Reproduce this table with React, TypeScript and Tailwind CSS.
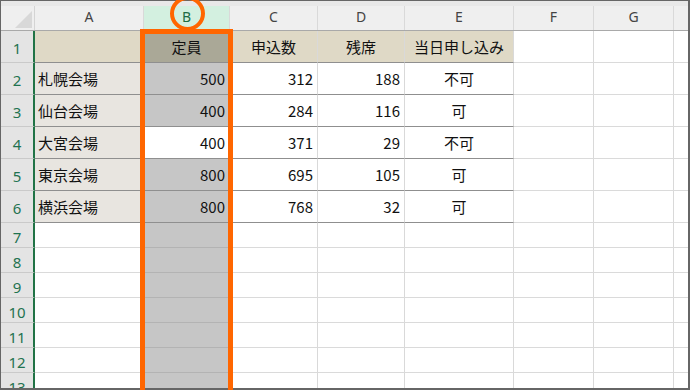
import React from "react";

const colW = [
  "w-[109px]",
  "w-[86px]",
  "w-[88px]",
  "w-[87px]",
  "w-[109px]",
  "w-[80px]",
  "w-[80px]",
];
const letters = ["A", "B", "C", "D", "E", "F", "G"];

type Row = { cells: string[]; big: boolean };

const rows: Row[] = [
  { cells: ["", "定員", "申込数", "残席", "当日申し込み"], big: true },
  { cells: ["札幌会場", "500", "312", "188", "不可"], big: true },
  { cells: ["仙台会場", "400", "284", "116", "可"], big: true },
  { cells: ["大宮会場", "400", "371", "29", "不可"], big: true },
  { cells: ["東京会場", "800", "695", "105", "可"], big: true },
  { cells: ["横浜会場", "800", "768", "32", "可"], big: true },
];
for (let i = 0; i < 7; i++) rows.push({ cells: [], big: false });

function cellClass(r: number, c: number): string {
  const base = "shrink-0 flex items-center border-r border-b text-[15px] leading-none text-[#111]";
  const inTable = r < 6 && c < 5;
  const bBorder = inTable ? "border-b-[#8f8f8f]" : c === 1 ? "border-b-[#b3b3b3]" : "border-b-[#dadada]";
  const rBorder = "border-r-[#d9d9d9]";
  let bg = "bg-white";
  if (r === 0 && c < 5) bg = c === 1 ? "bg-[#aaa897]" : "bg-[#dfd9c6]";
  else if (r > 0 && r < 6 && c === 0) bg = "bg-[#e8e5e0]";
  else if (c === 1 && r !== 3) bg = "bg-[#c6c6c6]";
  let align = "justify-center";
  if (r > 0 && r < 6) {
    if (c === 0) align = "justify-start pl-[3px]";
    else if (c >= 1 && c <= 3) align = "justify-end pr-[4px]";
  }
  return `${base} ${bBorder} ${rBorder} ${bg} ${align}`;
}

export default function App() {
  return (
    <div className="relative w-[690px] h-[390px] overflow-hidden bg-white font-['Noto_Sans_CJK_JP',sans-serif]">
      <div className="w-full h-full border-t border-l border-r-2 border-b-2 border-[#666666] overflow-hidden flex flex-col">
        <div className="h-[5px] shrink-0 bg-[#e8e8e8]" />
        {/* column header */}
        <div className="h-[25px] shrink-0 flex bg-[#efefef] border-b border-[#a9a9a9]">
          <div className="w-[34px] shrink-0 border-r border-[#d4d4d4] relative">
            <svg width="34" height="24" className="absolute left-0 top-0">
              <polygon points="14,22 31,22 31,5" fill="#d8d8d8" />
            </svg>
          </div>
          {letters.map((l, i) => (
            <div
              key={l}
              className={`${colW[i]} shrink-0 flex items-center justify-center border-r border-[#d9d9d9] text-[14px] leading-none font-['Noto_Sans',sans-serif] pb-[3px] ${
                i === 1 ? "bg-[#d3f0e0] text-[#1e6c46]" : "text-[#444]"
              }`}
            >
              {l}
            </div>
          ))}
          <div className="flex-1" />
        </div>
        {rows.map((row, r) => (
          <div key={r} className={`${row.big ? "h-[32px]" : "h-[25px]"} shrink-0 flex`}>
            <div className="w-[34px] shrink-0 flex items-center justify-center bg-[#e4e4e4] border-b border-b-[#cacaca] border-r-2 border-r-[#217346] text-[15px] leading-none text-[#1f7350] font-['Noto_Sans',sans-serif] pt-[4px]">
              {r + 1}
            </div>
            {colW.map((w, c) => (
              <div key={c} className={`${w} ${cellClass(r, c)}`}>
                {row.cells[c] ?? ""}
              </div>
            ))}
            <div className={`flex-1 border-b ${r < 6 ? "border-[#dadada]" : "border-[#dadada]"}`} />
          </div>
        ))}
      </div>
      <div className="absolute left-[140px] top-[29px] w-[93px] h-[400px] border-[5px] border-[#ff6600]" />
      <div className="absolute left-[170px] top-[-4px] w-[35px] h-[35px] rounded-full border-4 border-[#ff6600]" />
    </div>
  );
}
